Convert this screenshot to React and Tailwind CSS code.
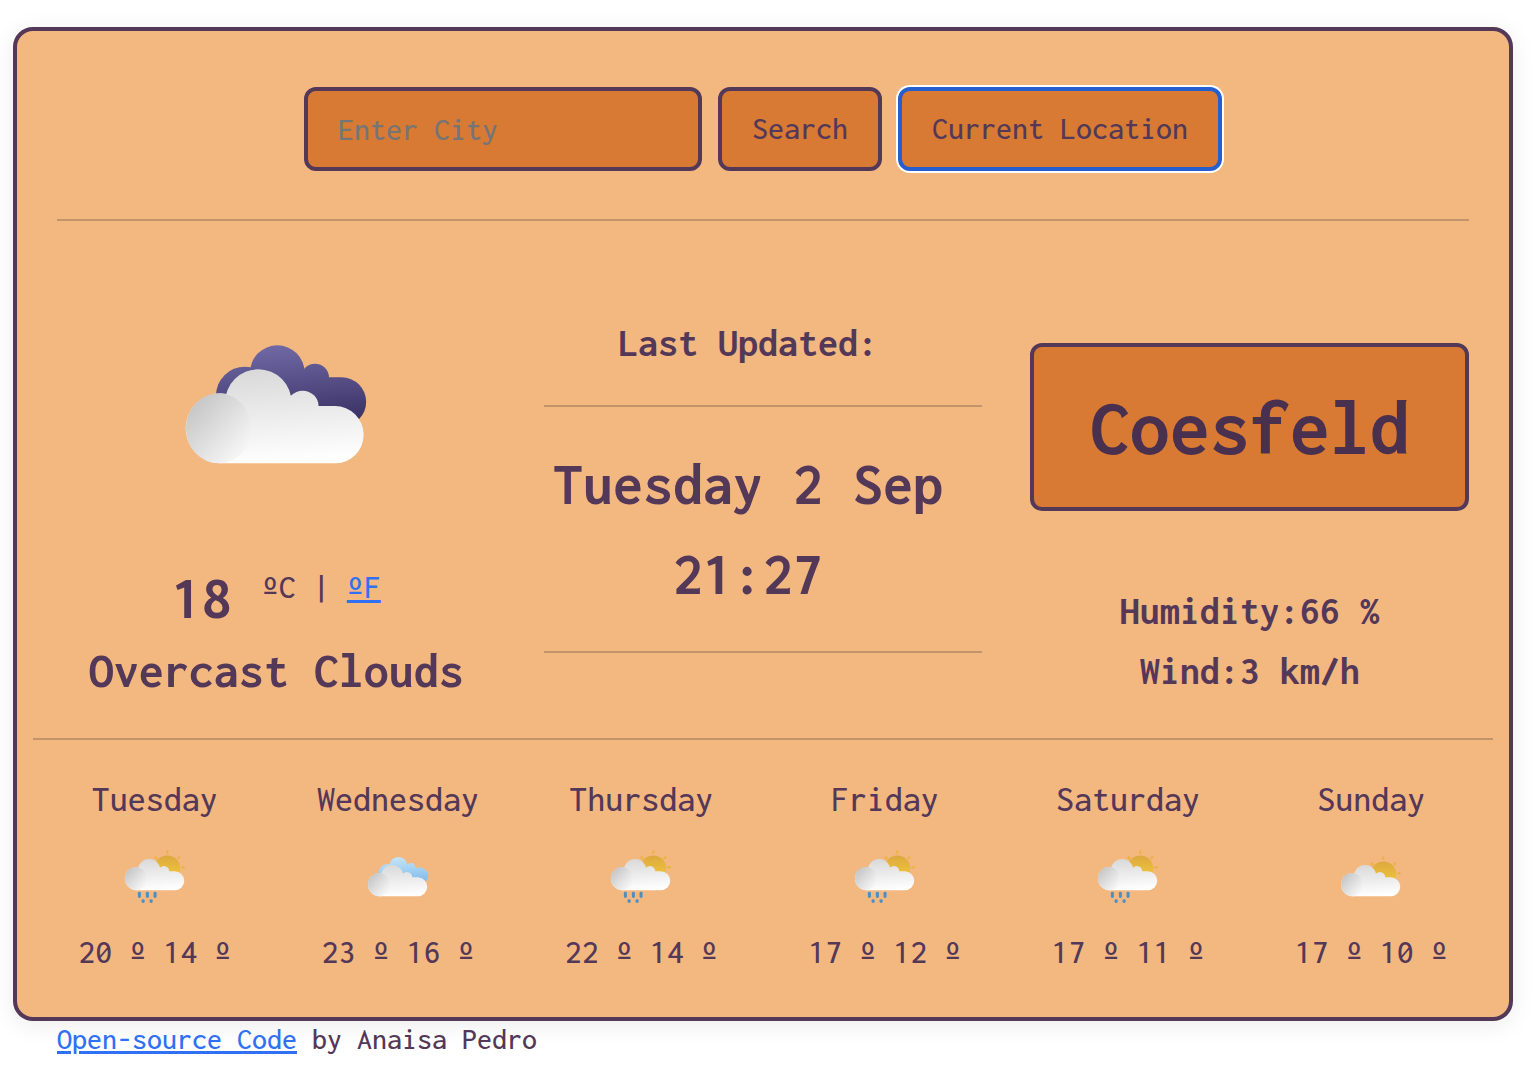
import { useId } from "react";

const forecast = [
  { day: "Tuesday", icon: "rain", max: 20, min: 14 },
  { day: "Wednesday", icon: "clouds", max: 23, min: 16 },
  { day: "Thursday", icon: "rain", max: 22, min: 14 },
  { day: "Friday", icon: "rain", max: 17, min: 12 },
  { day: "Saturday", icon: "rain", max: 17, min: 11 },
  { day: "Sunday", icon: "sun", max: 17, min: 10 },
];

const backColors = {
  overcast: ["#7068a4", "#3c3467"],
  clouds: ["#c4e4fa", "#82bdec"],
};

function WeatherIcon({ kind, label, className }) {
  const id = useId();
  const back = backColors[kind];
  const sunny = kind === "rain" || kind === "sun";
  return (
    <svg viewBox="3 -60 630 600" role="img" aria-label={label} className={className}>
      <defs>
        <linearGradient id={`${id}front`} gradientUnits="userSpaceOnUse" x1="280" y1="118" x2="300" y2="400">
          <stop offset="0" stopColor="#d9d9d9" />
          <stop offset="1" stopColor="#ffffff" />
        </linearGradient>
        <linearGradient id={`${id}side`} gradientUnits="userSpaceOnUse" x1="90" y1="220" x2="225" y2="345">
          <stop offset="0" stopColor="#c9c9c9" />
          <stop offset="1" stopColor="#f4f4f4" />
        </linearGradient>
        <linearGradient id={`${id}sun`} x1="0" y1="0" x2="0" y2="1">
          <stop offset="0" stopColor="#dca83f" />
          <stop offset="1" stopColor="#f4cd3c" />
        </linearGradient>
        {back && (
          <linearGradient id={`${id}back`} gradientUnits="userSpaceOnUse" x1="350" y1="46" x2="370" y2="275">
            <stop offset="0" stopColor={back[0]} />
            <stop offset="1" stopColor={back[1]} />
          </linearGradient>
        )}
      </defs>
      <g transform={kind === "rain" ? "translate(0 -54)" : undefined}>
        {back && (
          <g fill={`url(#${id}back)`}>
            <circle cx="225" cy="197" r="87" />
            <circle cx="322" cy="128" r="82" />
            <circle cx="435" cy="143" r="42" />
            <path d="M240 142H515a73 73 0 0 1 0 147H240z" />
          </g>
        )}
        {sunny && (
          <g>
            <circle cx="429" cy="202" r="116" fill={`url(#${id}sun)`} />
            <g stroke="#eab443" strokeWidth="20" strokeLinecap="round">
              <path d="M429 64V50M333 114l-10-10M527 112l10-10M563 194h14" />
            </g>
          </g>
        )}
        <g fill={`url(#${id}front)`}>
          <circle cx="265" cy="218" r="100" />
          <circle cx="398" cy="230" r="48" />
          <path d="M150 228H495a86 86 0 0 1 0 172H150z" />
        </g>
        <circle cx="152" cy="295" r="105" fill={`url(#${id}front)`} />
        <ellipse cx="146" cy="295" rx="98" ry="105" fill={`url(#${id}side)`} />
        {kind === "rain" && (
          <g fill="#4a90c6">
            <rect x="164" y="414" width="27" height="56" rx="13" />
            <rect x="236" y="414" width="27" height="56" rx="13" />
            <rect x="305" y="414" width="27" height="56" rx="13" />
            <rect x="197" y="480" width="28" height="34" rx="13" />
            <rect x="269" y="480" width="28" height="34" rx="13" />
          </g>
        )}
      </g>
    </svg>
  );
}

const control = "h-[84px] rounded-xl border-4 bg-[#d87a33] px-[30px] text-[32px]";

export default function App() {
  return (
    <div className="px-[13px] pt-[27px] pr-5 font-['Inconsolata','Noto_Sans_Mono_CJK_SC','Liberation_Mono',monospace] font-medium text-[#533858]">
      <main className="rounded-[20px] border-4 border-[#533858] bg-[#f3b780] px-4 pt-14 pb-10 shadow-[0_4px_24px_rgba(0,0,0,0.08)]">
        <form className="flex justify-center gap-4" onSubmit={(e) => e.preventDefault()}>
          <input
            type="text"
            aria-label="City"
            placeholder="Enter City"
            className={`${control} w-[398px] border-[#533858] placeholder:text-[#757575]`}
          />
          <button type="submit" className={`${control} border-[#533858]`}>Search</button>
          <button type="button" className={`${control} border-[#265ecf] ring-2 ring-white`}>Current Location</button>
        </form>

        <hr className="mx-6 mt-12 border-t-2 border-[#c29469]" />

        <section className="grid grid-cols-3 font-bold">
          <div className="px-6 pt-[89px] text-center">
            <WeatherIcon kind="overcast" label="Overcast clouds" className="mx-auto h-[200px] w-[210px]" />
            <div className="mt-14 flex h-[70px] items-start justify-center gap-[30px]">
              <span className="text-[60px] leading-[64px]">18</span>
              <span className="text-[34px] leading-[42px] font-medium whitespace-pre">
                ºC | <a href="#fahrenheit" className="text-[#3070f4] underline decoration-[3px]">ºF</a>
              </span>
            </div>
            <h2 className="mt-1 text-[50px] leading-[62px] whitespace-nowrap">Overcast Clouds</h2>
          </div>

          <div className="px-6 pt-[92px] text-center">
            <h3 className="pr-[30px] text-[40px] leading-[60px]">Last Updated:</h3>
            <hr className="mt-8 border-t-2 border-[#c29469]" />
            <p className="mt-8 pr-[30px] text-[60px] leading-[90px] whitespace-nowrap">
              Tuesday 2 Sep
              <br />
              21:27
            </p>
            <hr className="mt-8 border-t-2 border-[#c29469]" />
          </div>

          <div className="px-6 pt-[122px] text-center">
            <h1 className="rounded-xl border-4 border-[#533858] bg-[#d87a33] py-8 text-[80px] leading-[96px] text-[#49304f]">
              Coesfeld
            </h1>
            <ul className="mt-[70px] text-[40px] leading-[60px]">
              <li>Humidity:66 %</li>
              <li>Wind:3 km/h</li>
            </ul>
          </div>
        </section>

        <hr className="mt-9 border-t-2 border-[#c29469]" />

        <section className="grid grid-cols-6 pt-[34px] text-center">
          {forecast.map((f) => (
            <div key={f.day}>
              <div className="text-[36px] leading-[50px]">{f.day}</div>
              <WeatherIcon kind={f.icon} label={f.icon} className="mx-auto mt-[21px] h-[67px] w-[70px]" />
              <div className="mt-[15px] text-[34px] leading-[50px]">{f.max} º {f.min} º</div>
            </div>
          ))}
        </section>
      </main>
      <footer className="px-11 text-[30px] leading-9">
        <a href="#source" className="text-[#3070f4] underline decoration-[3px]">Open-source Code</a> by Anaisa Pedro
      </footer>
    </div>
  );
}
